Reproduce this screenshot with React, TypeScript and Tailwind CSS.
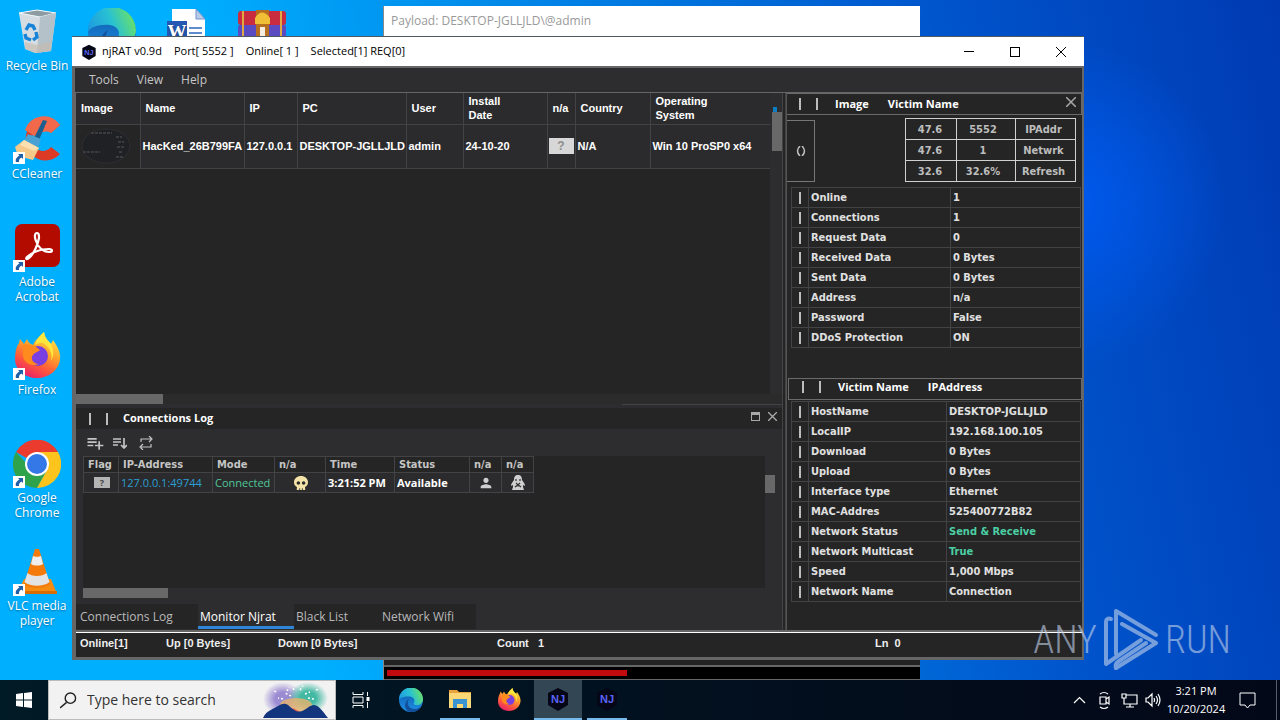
import type { ReactNode } from "react";
import { FaSkull } from "react-icons/fa";
import { MdPerson, MdPlaylistAdd } from "react-icons/md";

const victimColumns = [
  { label: "Image", width: "w-[64px]" },
  { label: "Name", width: "w-[104px]" },
  { label: "IP", width: "w-[53px]" },
  { label: "PC", width: "w-[109px]" },
  { label: "User", width: "w-[57px]" },
  { label: "Install Date", width: "w-[84px]" },
  { label: "n/a", width: "w-[28px]" },
  { label: "Country", width: "w-[75px]" },
  { label: "Operating System", width: "w-[120px]" },
];

const logColumns = [
  { label: "Flag", width: "w-[35px]" },
  { label: "IP-Address", width: "w-[94px]" },
  { label: "Mode", width: "w-[62px]" },
  { label: "n/a", width: "w-[51px]" },
  { label: "Time", width: "w-[69px]" },
  { label: "Status", width: "w-[75px]" },
  { label: "n/a", width: "w-[32px]" },
  { label: "n/a", width: "w-[32px]" },
];

const serverRows = [
  ["Online", "1"],
  ["Connections", "1"],
  ["Request Data", "0"],
  ["Received Data", "0 Bytes"],
  ["Sent Data", "0 Bytes"],
  ["Address", "n/a"],
  ["Password", "False"],
  ["DDoS Protection", "ON"],
];

const networkRows = [
  ["HostName", "DESKTOP-JGLLJLD"],
  ["LocalIP", "192.168.100.105"],
  ["Download", "0 Bytes"],
  ["Upload", "0 Bytes"],
  ["Interface type", "Ethernet"],
  ["MAC-Addres", "525400772B82"],
  ["Network Status", "Send & Receive"],
  ["Network Multicast", "True"],
  ["Speed", "1,000 Mbps"],
  ["Network Name", "Connection"],
];

const RecycleBinIcon = () => (
  <svg viewBox="0 0 48 48" className="h-12 w-12">
    <path d="M6 5 24 2 43 5 38 43 22 45 12 41Z" fill="#d5dde2" />
    <path d="M6 5 24 2 43 5 27 9Z" fill="#8d9ba3" stroke="#f4f8fa" />
    <path d="M27 9 43 5 38 43 24 45Z" fill="#b4c1c9" />
    <path d="M12 34 24 37 38 34 38 43 22 45 12 41Z" fill="#c8b9ad" opacity=".6" />
    <g fill="none" stroke="#1683d8" strokeWidth="3.4">
      <path d="m13 22 3-5 4 1 2 4" />
      <path d="m23 24 1 5-4 3" />
      <path d="m18 32-5-2-1-4" />
    </g>
  </svg>
);

const CCleanerIcon = () => (
  <svg viewBox="0 0 48 48" className="h-12 w-12">
    <path d="M47 9A20 21 0 1 0 47 38L38 31A11 11 0 1 1 38 17Z" fill="#dd3a26" />
    <path d="M47 9A20 21 0 0 0 12 14l11 7a11 11 0 0 1 15-4Z" fill="#f2684a" />
    <path d="m30 4 4 1-8 19-5-2Z" fill="#1b5f91" />
    <path d="m15 18 13 5-3 9-14-7Z" fill="#4aa1d3" />
    <path d="M11 24 26 32 20 44 5 40 2 31Z" fill="#f5c98a" />
    <path d="m11 24 15 8-5 3-14-6Z" fill="#fbe0b2" />
  </svg>
);

const AcrobatIcon = () => (
  <svg viewBox="0 0 48 48" className="h-12 w-12">
    <rect x="2" y="0" width="45" height="43" rx="7" fill="#b30b00" />
    <path
      d="M24 9c-2 0-3 3-1 8 2 6 7 11 13 11 4 0 4-3 0-3-8 0-16 3-22 8-2 2 0 3 2 1 5-4 9-14 10-20 0-3 0-5-2-5Z"
      fill="none"
      stroke="#fff"
      strokeWidth="2.2"
    />
  </svg>
);

const FirefoxIcon = ({ className = "h-12 w-12" }: { className?: string }) => (
  <svg viewBox="0 0 48 48" className={className}>
    <defs>
      <linearGradient id="fox" x1=".8" y1="0" x2=".3" y2="1">
        <stop offset="0" stopColor="#fff04a" />
        <stop offset=".4" stopColor="#ffa42a" />
        <stop offset=".7" stopColor="#ff5a3a" />
        <stop offset="1" stopColor="#e9206b" />
      </linearGradient>
    </defs>
    <path
      d="M31 0c1 7 4 8 7 12l2-4c4 6 8 12 7 19-1 11-11 19-23 19C12 46 2 38 2 27c0-6 1-12 4-16l1-4 4 5 3-5c1 3 3 5 6 6 2-5 7-9 11-13Z"
      fill="url(#fox)"
    />
    <circle cx="25" cy="24" r="10" fill="#7a3fe0" />
    <path d="M10 13c4-2 8 0 12 1l5 4c-2 2-5 2-7 5-3 3 0 9 6 9-9 3-16-2-16-9Z" fill="#ff8a1e" />
    <path d="M31 0c1 7 4 8 7 12 3 6 3 12 0 17 2-9-2-14-8-18-3 0-5 0-8 2 1-5 5-9 9-13Z" fill="#ffe63d" />
  </svg>
);

const ChromeIcon = () => (
  <svg viewBox="0 0 48 48" className="h-12 w-12">
    <path d="M24 24 3 12a24 24 0 0 1 42 0Z" fill="#ea3b2e" />
    <path d="M24 24H14L3 12a24 24 0 0 0 21 36l10-18Z" fill="#2fa24c" />
    <path d="M24 12h21a24 24 0 0 1-21 36l10-18a12 12 0 0 0-10-18Z" fill="#fcc41d" />
    <circle cx="24" cy="24" r="12" fill="#fff" />
    <circle cx="24" cy="24" r="10" fill="#3478e8" />
  </svg>
);

const VlcIcon = () => (
  <svg viewBox="0 0 48 48" className="h-12 w-12">
    <path d="M11 31h27l6 15H4Z" fill="#f68b12" />
    <path d="M4 43h40v3H4Z" fill="#d96c00" />
    <path d="M22 1h4l11 35c-5 5-21 5-26 0Z" fill="#f47b09" />
    <path d="m20 8-2 8c3 2 9 2 12 0l-2-8c-2 1-6 1-8 0Z" fill="#eee" />
    <path d="m14.500 25-3 9c6 5 19 5 25 0l-3-9c-4 4-15 4-19 0Z" fill="#e3e3e3" />
  </svg>
);

const EdgeIcon = ({ className = "h-12 w-12" }: { className?: string }) => (
  <svg viewBox="0 0 48 48" className={className}>
    <defs>
      <linearGradient id="edgeTop" x1="0" y1=".6" x2="1" y2=".3">
        <stop offset="0" stopColor="#1d9be0" />
        <stop offset=".5" stopColor="#29c1d3" />
        <stop offset="1" stopColor="#6ee35f" />
      </linearGradient>
      <linearGradient id="edgeBody" x1="0" y1="0" x2="0" y2="1">
        <stop offset="0" stopColor="#0d58a8" />
        <stop offset="1" stopColor="#1e90e6" />
      </linearGradient>
    </defs>
    <circle cx="24" cy="24" r="24" fill="url(#edgeBody)" />
    <path
      d="M0 24A24 24 0 0 1 48 22c0 8-6 12-12 12-5 0-8-2-6-5 3-5-1-11-8-12C11 16 2 19 0 24Z"
      fill="url(#edgeTop)"
    />
    <path d="M20 22c-6 9 0 21 12 20 6 0 10-3 13-6-4 8-12 12-21 12C10 47 8 29 20 22Z" fill="#124f9d" />
  </svg>
);

const WordIcon = () => (
  <svg viewBox="0 0 48 48" className="h-12 w-12">
    <path d="M9 1h24l9 10v36H9Z" fill="#fff" />
    <path d="M33 1v10h9Z" fill="#b9cbe6" stroke="#6f92cc" />
    <path d="M26 20h13M26 25h13M26 30h13" stroke="#2b66c0" strokeWidth="1.5" />
    <path d="M4 13h20v24H4Z" fill="#2458b3" />
    <text
      x="14"
      y="30"
      fontSize="19"
      fontWeight="700"
      fill="#fff"
      textAnchor="middle"
      fontFamily="Liberation Serif, serif"
    >
      W
    </text>
  </svg>
);

const WinrarIcon = () => (
  <svg viewBox="0 0 48 48" className="h-12 w-12">
    <rect y="3" width="48" height="14" rx="3" fill="#c92c3e" />
    <rect y="17" width="48" height="12" rx="2" fill="#5b4bc0" />
    <rect y="29" width="48" height="14" rx="3" fill="#2b9447" />
    <path d="M4 3h2v26H4zM42 3h2v26h-2z" fill="#dfa944" />
    <path d="M18 2h13v42H18z" fill="#b66e1f" />
    <path d="M17 10q7-11 15 0v6H17Z" fill="#f0bf35" />
    <path d="M22 19h5v10h-5z" fill="#f4ede0" />
  </svg>
);

const NjIcon = ({ className }: { className: string }) => (
  <svg viewBox="0 0 24 24" className={className}>
    <path d="m12 1 10 5v12l-10 6L2 18V6Z" fill="#050616" />
    <text
      x="12"
      y="16"
      fontSize="11"
      fontWeight="700"
      fill="#5b64f5"
      textAnchor="middle"
      fontFamily="Liberation Sans, sans-serif"
    >
      NJ
    </text>
  </svg>
);

const PenguinIcon = () => (
  <svg viewBox="0 0 16 16" className="mx-auto h-4 w-4">
    <path d="M8 0c3 0 4 2 4 5 1 2 3 3 3 6l-2-1v2l1 3H2l1-3v-2l-2 1c0-3 2-4 3-6 0-3 1-5 4-5Z" fill="#cfcfcf" />
    <path d="M6 4v2M10 4v2M6 8l2 2 2-2M5 12q3-3 6 0" fill="none" stroke="#333" strokeWidth="1.2" />
  </svg>
);

const ShortcutArrow = () => (
  <svg viewBox="0 0 12 12" className="absolute bottom-0 left-0 h-3 w-3 bg-white">
    <path d="M5 2h5v5L8.500 5.500C6 7 6 8 6 10H3C2 7 4 5 6.500 3.500Z" fill="#1f5fa8" />
  </svg>
);

interface DesktopIconProps {
  label?: string;
  shortcut?: boolean;
  children: ReactNode;
}

const DesktopIcon = ({ label, shortcut, children }: DesktopIconProps) => (
  <button className="flex h-27 w-[74px] flex-col items-center gap-[2px] text-xs leading-[15px] text-white [text-shadow:0_1px_2px_#0006]">
    <span className="relative">
      {children}
      {shortcut && <ShortcutArrow />}
    </span>
    <span className="w-[68px]">{label}</span>
  </button>
);

const Bars = () => (
  <>
    <span className="h-3 w-[2px] bg-[#bdbdbd]" />
    <span className="h-3 w-[2px] bg-[#bdbdbd]" />
  </>
);

const CloseIcon = ({ className }: { className: string }) => (
  <svg viewBox="0 0 10 10" className={className} fill="none" stroke="currentColor">
    <path d="m0 0 10 10M10 0 0 10" />
  </svg>
);

const UnknownFlag = ({ className }: { className: string }) => (
  <span className={`mx-auto flex items-center justify-center font-bold text-[#8d8d8d] ${className}`}>?</span>
);

function TitleBar() {
  return (
    <header className="flex h-[30px] items-center border-t border-[#4d5a63] bg-white text-[11px] text-black">
      <NjIcon className="ml-[9px] h-4 w-4" />
      <div className="flex gap-3 pl-[5px] whitespace-pre">
        <span>njRAT v0.9d</span>
        <span>Port[ 5552 ]</span>
        <span>Online[ 1 ]</span>
        <span>Selected[1] REQ[0]</span>
      </div>
      <div className="ml-auto flex h-full">
        <button aria-label="Minimize" className="flex w-[46px] items-center justify-center">
          <span className="h-px w-[10px] bg-black" />
        </button>
        <button aria-label="Maximize" className="flex w-[46px] items-center justify-center">
          <span className="h-[10px] w-[10px] border border-black" />
        </button>
        <button aria-label="Close" className="flex w-[46px] items-center justify-center">
          <CloseIcon className="h-[10px] w-[10px]" />
        </button>
      </div>
    </header>
  );
}

function VictimTable() {
  return (
    <div className="flex min-h-0 flex-1 bg-[#252525]">
      <div className="min-w-0 flex-1 overflow-hidden">
        <table className="w-[694px] table-fixed border-collapse bg-[#2b2b2d] font-['Liberation_Sans',sans-serif] text-[11px] leading-[14px] font-bold text-white">
          <thead>
            <tr className="h-[31px]">
              {victimColumns.map(({ label, width }) => (
                <th key={label} className={`border-r border-b border-[#434346] pl-[5px] text-left ${width}`}>
                  <span className="block max-w-[56px]">{label}</span>
                </th>
              ))}
            </tr>
          </thead>
          <tbody>
            <tr className="h-11 whitespace-nowrap [&>td]:border-r [&>td]:border-b [&>td]:border-[#434346] [&>td]:pl-[2px]">
              <td className="bg-[#252526]">
                <svg viewBox="0 0 54 38" className="ml-[2px] h-[38px] w-[54px]" fill="none" stroke="#3b3b40">
                  <ellipse cx="26" cy="19" rx="24" ry="17" fill="#202124" stroke="#2f2f33" />
                  <path
                    d="M11 6h21M3 25h17M36 10h6M38 15h6M37 20h7M39 25h4M36 30h7"
                    strokeDasharray="3 1"
                    strokeWidth="2"
                  />
                </svg>
              </td>
              <td>HacKed_26B799FA</td>
              <td>127.0.0.1</td>
              <td>DESKTOP-JGLLJLD</td>
              <td>admin</td>
              <td>24-10-20</td>
              <td className="!pl-0">
                <UnknownFlag className="h-4 w-[25px] bg-[#d7d7d7] text-xs" />
              </td>
              <td>N/A</td>
              <td>Win 10 ProSP0 x64</td>
            </tr>
          </tbody>
        </table>
      </div>
      <div className="flex w-3 flex-col items-end bg-[#2d2d30] pt-[14px]">
        <span className="mr-[5px] h-[5px] w-1 bg-[#0c7fc4]" />
        <span className="h-[39px] w-[10px] bg-[#686868]" />
      </div>
    </div>
  );
}

function ConnectionsLog() {
  return (
    <section className="flex h-[226px] flex-col bg-[#2d2d30]">
      <div className="h-1 w-full">
        <div className="ml-auto h-px w-[160px] bg-[#434346]" />
      </div>
      <header className="flex h-[21px] items-center gap-[15px] bg-[#252526] pr-[5px] pl-[13px]">
        <Bars />
        <h2 className="text-[11px] font-bold text-white">Connections Log</h2>
        <div className="ml-auto flex gap-2 self-start pt-1 text-[#a8a8a8]">
          <button aria-label="Float" className="h-[9px] w-[9px] border border-t-3 border-current" />
          <button aria-label="Close log">
            <CloseIcon className="h-[9px] w-[9px] stroke-[1.5]" />
          </button>
        </div>
      </header>
      <div className="flex h-[27px] items-center gap-2 pl-[9px] text-[#c4c4c4]">
        <button aria-label="Add">
          <MdPlaylistAdd size={20} />
        </button>
        <button aria-label="Sort">
          <svg viewBox="0 0 14 12" className="h-3 w-[14px]" fill="none" stroke="currentColor" strokeWidth="1.7">
            <path d="M0 2h8M0 5h8M0 8h5M11 1v9M8 8l3 3 3-3" />
          </svg>
        </button>
        <button aria-label="Refresh" className="ml-1">
          <svg viewBox="0 0 14 14" className="h-[14px] w-[14px]" fill="none" stroke="currentColor" strokeWidth="1.2">
            <path d="M2 6V3h10M10 0l3 3-3 3M12 8v3H2M4 8l-3 3 3 3" />
          </svg>
        </button>
      </div>
      <div className="flex h-[132px] pl-[7px]">
        <div className="min-w-0 flex-1 overflow-hidden bg-[#252525]">
          <table className="w-[450px] table-fixed border-collapse text-left text-[11px] leading-[14px] whitespace-nowrap">
            <thead>
              <tr className="h-4 font-['DejaVu_Sans_Condensed','DejaVu_Sans',sans-serif] text-[#c4c4c4]">
                {logColumns.map(({ label, width }, i) => (
                  <th key={i} className={`border border-[#434346] pl-1 ${width}`}>
                    {label}
                  </th>
                ))}
              </tr>
            </thead>
            <tbody>
              <tr className="h-5 bg-[#2b2b2d] [&>td]:border [&>td]:border-[#434346] [&>td]:pl-[2px]">
                <td>
                  <UnknownFlag className="h-[11px] w-4 bg-[#b4b4b4] text-[9px] text-[#444]" />
                </td>
                <td className="text-[#2a9fd6]">127.0.0.1:49744</td>
                <td className="text-[#4fc79b]">Connected</td>
                <td>
                  <FaSkull size={14} className="mx-auto text-[#f3e3a8]" />
                </td>
                <td className="font-bold text-white">3:21:52 PM</td>
                <td className="font-bold text-white">Available</td>
                <td className="!pl-0">
                  <MdPerson size={16} className="mx-auto text-[#cfcfcf]" />
                </td>
                <td className="!pl-0">
                  <PenguinIcon />
                </td>
              </tr>
            </tbody>
          </table>
        </div>
        <div className="w-[17px] pt-[19px]">
          <div className="h-[18px] w-[10px] bg-[#686868]" />
        </div>
      </div>
      <div className="ml-[7px] h-[10px] w-[85px] bg-[#686868]" />
      <nav className="mt-[6px] flex h-[25px] text-xs text-[#b9b9b9]">
        <button className="w-[122px] bg-[#252526] pl-1 text-left">Connections Log</button>
        <button className="w-[96px] border-b-3 border-[#2f86d8] pt-[3px] pl-[2px] text-left text-white">
          Monitor Njrat
        </button>
        <button className="w-[86px] bg-[#252526] pl-[2px] text-left">Black List</button>
        <button className="w-[96px] bg-[#252526] pl-[2px] text-left">Network Wifi</button>
      </nav>
    </section>
  );
}

function PropertyTable({ rows, labelWidth }: { rows: string[][]; labelWidth: string }) {
  return (
    <table className="ml-1 w-[290px] table-fixed border-collapse font-['DejaVu_Sans_Condensed','DejaVu_Sans',sans-serif] text-[11px] leading-[14px] font-bold text-[#e0e0e0]">
      <tbody>
        {rows.map(([label, value]) => (
          <tr key={label} className="h-5">
            <td className="w-[17px] border border-[#434346]">
              <span className="mx-auto block h-3 w-[2px] bg-[#bdbdbd]" />
            </td>
            <th className={`border border-[#434346] pl-[2px] text-left ${labelWidth}`}>{label}</th>
            <td
              className={`border border-[#434346] pl-[2px] ${value === "True" || value.startsWith("Send") ? "text-[#4ccfa4]" : ""}`}
            >
              {value}
            </td>
          </tr>
        ))}
      </tbody>
    </table>
  );
}

function SidePanel() {
  return (
    <aside className="w-[296px] shrink-0 border-l border-[#555558] bg-[#252525] text-[11px] font-bold text-white">
      <header className="flex h-[22px] items-center gap-[15px] border border-l-0 border-[#6a6a6a] pr-[5px] pl-3">
        <Bars />
        <h2 className="ml-[2px]">Image</h2>
        <h2 className="ml-1">Victim Name</h2>
        <button aria-label="Close panel" className="mb-1 ml-auto text-[#a8a8a8]">
          <CloseIcon className="h-[10px] w-[10px] stroke-[1.5]" />
        </button>
      </header>
      <div className="flex h-[72px] items-start justify-between pt-[3px] pr-[6px]">
        <button
          className="mt-[2px] flex h-[62px] w-7 items-center justify-center border border-l-0 border-[#777] text-[#c0c0c0]"
          aria-label="Expand"
        >
          <svg viewBox="0 0 10 10" className="h-[10px] w-[10px]" fill="none" stroke="currentColor" strokeWidth="1.500">
            <path d="M4 0Q-1 5 4 10M6 0q5 5 0 10" />
          </svg>
        </button>
        <table className="w-[170px] table-fixed border-collapse text-center font-['DejaVu_Sans_Condensed','DejaVu_Sans',sans-serif] leading-[14px] text-[#bdbdbd]">
          <tbody>
            {[
              ["47.6", "5552", "IPAddr"],
              ["47.6", "1", "Netwrk"],
              ["32.6", "32.6%", "Refresh"],
            ].map((row) => (
              <tr key={row[2]} className="h-[21px]">
                <td className="w-[51px] border border-[#d0d0d0] pt-[2px] pr-[2px]">{row[0]}</td>
                <td className="w-[59px] border border-[#d0d0d0] pt-[2px] pr-[6px]">{row[1]}</td>
                <td className="w-[60px] border border-[#d0d0d0] pt-[2px] pr-1">
                  <button>{row[2]}</button>
                </td>
              </tr>
            ))}
          </tbody>
        </table>
      </div>
      <PropertyTable rows={serverRows} labelWidth="w-[142px]" />
      <header className="mt-[30px] ml-[1px] flex h-[22px] items-center gap-[15px] border border-[#6a6a6a] pb-1 pl-[13px]">
        <Bars />
        <h2 className="ml-[2px]">Victim Name</h2>
        <h2 className="ml-1">IPAddress</h2>
      </header>
      <div className="mt-[1px]">
        <PropertyTable rows={networkRows} labelWidth="w-[138px]" />
      </div>
    </aside>
  );
}

function MainWindow() {
  return (
    <main className="absolute top-9 right-[196px] bottom-5 left-[72px] flex flex-col bg-[#666]">
      <TitleBar />
      <nav className="mt-[2px] mr-[2px] ml-[3px] flex h-6 items-center gap-[18px] bg-[#2d2d2f] pl-[14px] text-xs text-[#c6c6c6]">
        <button>Tools</button>
        <button>View</button>
        <button>Help</button>
      </nav>
      <div className="mt-px mr-[2px] ml-1 flex min-h-0 flex-1">
        <div className="flex min-w-0 flex-1 flex-col">
          <VictimTable />
          <div className="h-[10px] bg-[#2b2b2b]">
            <div className="h-full w-[87px] bg-[#686868]" />
          </div>
          <ConnectionsLog />
        </div>
        <div className="w-1 border-x border-[#434346] bg-[#252526]" />
        <SidePanel />
      </div>
      <footer className="mt-[2px] mr-[2px] mb-[3px] ml-1 grid h-[25px] grid-cols-[86px_112px_219px_378px_1fr] items-center border-t border-white bg-[#252526] pb-[3px] pl-[4px] font-['Liberation_Sans',sans-serif] text-[11px] font-bold whitespace-pre text-[#eee]">
        <span>Online[1]</span>
        <span>Up [0 Bytes]</span>
        <span>Down [0 Bytes]</span>
        <span>{"Count   1"}</span>
        <span>{"Ln  0"}</span>
      </footer>
    </main>
  );
}

function PayloadWindow() {
  return (
    <section className="absolute top-[6px] right-[360px] bottom-0 left-[383px] flex flex-col justify-between border-l border-[#888] bg-[#222]">
      <h2 className="h-[30px] bg-white pl-[7px] text-xs leading-[30px] text-[#999]">
        Payload: DESKTOP-JGLLJLD\@admin
      </h2>
      <div className="h-[15px] border-t-2 border-b border-[#666] bg-black px-[3px] py-[3px]">
        <div className="h-[6px] w-[240px] bg-[#c00a0d]" />
      </div>
    </section>
  );
}

function Watermark() {
  return (
    <div className="absolute right-[49px] bottom-2 flex items-center gap-[6px] font-['Roboto_Condensed','Liberation_Sans_Narrow',sans-serif] text-[38px] leading-[62px] font-light text-[#c4d3ea] opacity-60">
      <span>ANY</span>
      <svg
        viewBox="0 0 56 64"
        className="h-16 w-14"
        fill="none"
        stroke="currentColor"
        strokeWidth="4"
        strokeLinejoin="round"
        strokeLinecap="round"
      >
        <path d="M13 46V3l40 24" />
        <path d="M8 11c-3-1-5 0-5 3v42l35-24" />
        <path d="M13 60 53 35 19 16" />
        <path d="M13 60c-1-3 0-5 3-7l27-18" />
      </svg>
      <span>RUN</span>
    </div>
  );
}

function Taskbar() {
  return (
    <footer className="flex h-10 shrink-0 bg-linear-to-r from-[#001a26] to-[#030818] text-white">
      <button aria-label="Start" className="flex w-12 items-center justify-center">
        <svg viewBox="0 0 16 16" className="h-4 w-4" fill="#fff">
          <path d="m0 2 7-1v6.500H0zM8 1l8-1v7.500H8zM0 8.500h7V15l-7-1zM8 8.500h8V16l-8-1z" />
        </svg>
      </button>
      <label className="flex w-72 items-center border border-[#bbb] bg-[#f2f2f2] pl-[11px] text-[#222]">
        <svg
          viewBox="0 0 18 18"
          className="h-[17px] w-[17px] shrink-0"
          fill="none"
          stroke="currentColor"
          strokeWidth="1.500"
        >
          <circle cx="11" cy="6.500" r="5.500" />
          <path d="m7 11-7 6" />
        </svg>
        <input
          type="text"
          aria-label="Search"
          placeholder="Type here to search"
          className="ml-[10px] w-full min-w-0 flex-1 text-sm outline-none placeholder:text-[#333]"
        />
        <svg viewBox="0 0 66 36" className="mr-[6px] h-9 w-[66px] shrink-0">
          <defs>
            <radialGradient id="burstA">
              <stop offset=".4" stopColor="#9a8bd2" />
              <stop offset="1" stopColor="#9a8bd2" stopOpacity="0" />
            </radialGradient>
            <radialGradient id="burstB">
              <stop offset=".4" stopColor="#43b9a4" />
              <stop offset="1" stopColor="#43b9a4" stopOpacity="0" />
            </radialGradient>
          </defs>
          <ellipse cx="20" cy="17" rx="20" ry="17" fill="url(#burstA)" />
          <ellipse cx="45" cy="16" rx="20" ry="16" fill="url(#burstB)" />
          <ellipse cx="33" cy="23" rx="16" ry="7" fill="#e8b36d" opacity=".8" />
          <path
            d="m24 9 2-4M28 14l-6-3M31 8l-2-4M37 8l3-4M42 12l5-2M20 17l-5-1M45 16l6 1M13 10l-3-2M53 8l3-1"
            stroke="#fff"
            strokeWidth="1.500"
            strokeDasharray="2 2"
          />
          <path d="m30 26 10 5 9-6v11H30Z" fill="#e86a4c" />
          <path d="M0 36c4-8 9-8 13-11 4-2 8-5 12-2 5 4 8 8 14 6 5-2 8-6 12-6 6 1 9 7 14 13Z" fill="#12357e" />
        </svg>
      </label>
      <button aria-label="Task View" className="flex w-[50px] items-center justify-center">
        <svg viewBox="0 0 18 16" className="h-4 w-[18px]" fill="none" stroke="#fff">
          <path d="M1 0v2.500h10V0M1 16v-2.500h10V16M1 5h10v6H1ZM15.500 0v4M15.500 10v6" />
          <rect x="15" y="5.500" width="2" height="3" fill="#fff" />
        </svg>
      </button>
      <button aria-label="Edge" className="flex w-[49px] items-center justify-center">
        <EdgeIcon className="h-6 w-6" />
      </button>
      <button aria-label="File Explorer" className="flex w-[49px] items-center justify-center">
        <span className="flex h-full w-10 items-center justify-center border-b-2 border-[#76b9ed]">
          <svg viewBox="0 0 24 20" className="h-5 w-6">
            <path d="M1 1h8l2 2h12v16H1Z" fill="#e8a33d" />
            <path d="M1 4h22v15H1Z" fill="#fbd775" />
            <path d="M5 10h14v9h-4v-4H9v4H5Z" fill="#3c93d1" />
          </svg>
        </span>
      </button>
      <button aria-label="Firefox" className="flex w-[49px] items-center justify-center">
        <FirefoxIcon className="h-6 w-6" />
      </button>
      <button
        aria-label="NJ window"
        className="ml-px flex w-12 items-center justify-center border-b-2 border-[#76b9ed] bg-[#334653]"
      >
        <NjIcon className="h-6 w-6" />
      </button>
      <button aria-label="NJ payload" className="flex w-[50px] items-center justify-center">
        <span className="flex h-full w-10 items-center justify-center border-b-2 border-[#76b9ed]">
          <NjIcon className="h-6 w-6" />
        </span>
      </button>
      <div className="mr-[3px] ml-auto flex items-center border-r border-[#555d6a]">
        <svg viewBox="0 0 88 20" className="mr-[5px] h-5 w-[88px]" fill="none" stroke="#fff" strokeWidth="1.200">
          <path d="m1 13 5.500-5.500L12 13" />
          <path d="M27 7h6v7h-6ZM33 9l3-2v7l-3-2M27 4q4-3 8 0M27 17q4 3 8 0" />
          <path d="M53 5h11v9H51v-4M57 14v3M53 17h8M49 4h4v4h-4ZM51 8v3" />
          <path d="M73 8h2l4-4v12l-4-4h-2ZM81 8q1 2 0 4M83 6q3 4 0 8M85 4q4 6 0 12" />
        </svg>
        <div className="w-[60px] text-center text-[11px] leading-[18px]">
          <p>3:21 PM</p>
          <p>10/20/2024</p>
        </div>
        <button aria-label="Notifications" className="mr-[20px] ml-[13px]">
          <svg viewBox="0 0 17 17" className="h-[17px] w-[17px]" fill="none" stroke="#fff">
            <path d="M1 1h15v12h-5l-2.500 3L6 13H1Z" />
          </svg>
        </button>
      </div>
    </footer>
  );
}

export default function App() {
  return (
    <div className="flex h-screen flex-col overflow-hidden bg-[#00aeff] font-['Open_Sans','Noto_Sans',sans-serif]">
      <div className="relative min-h-0 flex-1 overflow-hidden bg-[radial-gradient(circle_at_83%_30%,#005af0_0%,transparent_14%),linear-gradient(78deg,#00b0ff_22%,#0054cc_76%,#003ab2_100%)]">
        <div className="flex items-start gap-[1px] pt-2">
          <div>
            <DesktopIcon label="Recycle Bin">
              <RecycleBinIcon />
            </DesktopIcon>
            <DesktopIcon label="CCleaner" shortcut>
              <CCleanerIcon />
            </DesktopIcon>
            <DesktopIcon label="Adobe Acrobat" shortcut>
              <AcrobatIcon />
            </DesktopIcon>
            <DesktopIcon label="Firefox" shortcut>
              <FirefoxIcon />
            </DesktopIcon>
            <DesktopIcon label="Google Chrome" shortcut>
              <ChromeIcon />
            </DesktopIcon>
            <DesktopIcon label="VLC media player" shortcut>
              <VlcIcon />
            </DesktopIcon>
          </div>
          <DesktopIcon>
            <EdgeIcon />
          </DesktopIcon>
          <DesktopIcon>
            <WordIcon />
          </DesktopIcon>
          <DesktopIcon>
            <WinrarIcon />
          </DesktopIcon>
        </div>
        <PayloadWindow />
        <MainWindow />
        <Watermark />
      </div>
      <Taskbar />
    </div>
  );
}
